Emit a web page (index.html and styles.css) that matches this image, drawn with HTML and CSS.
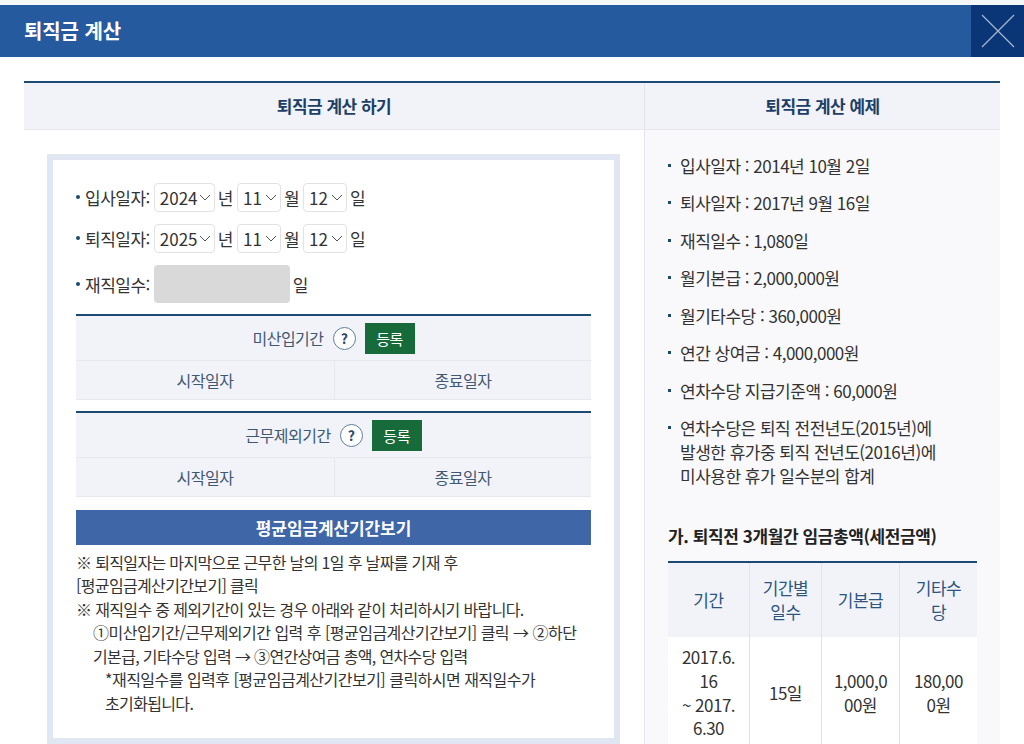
FILE: index.html
```html
<!DOCTYPE html>
<html lang="ko">

<head>
    <meta charset="utf-8">
    <title>퇴직금 계산</title>
    <link rel="stylesheet" href="styles.css">
</head>

<body>
    <div class="top_bar">
        <h1 class="top_title">퇴직금 계산</h1>
        <button class="btn_close">
            <svg width="34" height="34" viewBox="0 0 34 34">
                <path d="M1 1L33 33M33 1L1 33" stroke="#a9b8d0" stroke-width="1.2" fill="none"></path>
            </svg>
        </button>
    </div>

    <div class="content">
        <div class="col_left">
            <div class="col_head">퇴직금 계산 하기</div>
            <div class="calc_box">
                <div class="form_row">
                    <span class="form_label">입사일자:</span>
                    <span class="sel sel_year">2024<svg class="arrow" viewBox="0 0 12 7"><path d="M1 1L6 6L11 1"></path></svg></span>
                    <span class="unit">년</span>
                    <span class="sel">11<svg class="arrow" viewBox="0 0 12 7"><path d="M1 1L6 6L11 1"></path></svg></span>
                    <span class="unit">월</span>
                    <span class="sel">12<svg class="arrow" viewBox="0 0 12 7"><path d="M1 1L6 6L11 1"></path></svg></span>
                    <span class="unit">일</span>
                </div>
                <div class="form_row">
                    <span class="form_label">퇴직일자:</span>
                    <span class="sel sel_year">2025<svg class="arrow" viewBox="0 0 12 7"><path d="M1 1L6 6L11 1"></path></svg></span>
                    <span class="unit">년</span>
                    <span class="sel">11<svg class="arrow" viewBox="0 0 12 7"><path d="M1 1L6 6L11 1"></path></svg></span>
                    <span class="unit">월</span>
                    <span class="sel">12<svg class="arrow" viewBox="0 0 12 7"><path d="M1 1L6 6L11 1"></path></svg></span>
                    <span class="unit">일</span>
                </div>
                <div class="form_row form_row_days">
                    <span class="form_label">재직일수:</span>
                    <span class="days_input"></span>
                    <span class="unit">일</span>
                </div>

                <div class="period">
                    <div class="period_head">미산입기간 <span class="help">?</span> <span class="btn_reg">등록</span></div>
                    <div class="period_cols">
                        <div>시작일자</div>
                        <div>종료일자</div>
                    </div>
                </div>
                <div class="period">
                    <div class="period_head">근무제외기간 <span class="help">?</span> <span class="btn_reg">등록</span></div>
                    <div class="period_cols">
                        <div>시작일자</div>
                        <div>종료일자</div>
                    </div>
                </div>

                <div class="btn_period">평균임금계산기간보기</div>

                <div class="notes">
                    <p>※ 퇴직일자는 마지막으로 근무한 날의 1일 후 날짜를 기재 후<br>[평균임금계산기간보기] 클릭</p>
                    <p>※ 재직일수 중 제외기간이 있는 경우 아래와 같이 처리하시기 바랍니다.</p>
                    <p class="note_sub"><span class="note_wide">①미산입기간/근무제외기간 입력 후 [평균임금계산기간보기] 클릭 → ②하단</span><br>기본급, 기타수당 입력 → ③연간상여금 총액, 연차수당 입력</p>
                    <p class="note_sub2"><span class="note_wide">*재직일수를 입력후 [평균임금계산기간보기] 클릭하시면 재직일수가</span><br>초기화됩니다.</p>
                </div>
            </div>
        </div>

        <div class="col_right">
            <div class="col_head">퇴직금 계산 예제</div>
            <ul class="sample_list">
                <li>입사일자 : 2014년 10월 2일</li>
                <li>퇴사일자 : 2017년 9월 16일</li>
                <li>재직일수 : 1,080일</li>
                <li>월기본급 : 2,000,000원</li>
                <li>월기타수당 : 360,000원</li>
                <li>연간 상여금 : 4,000,000원</li>
                <li>연차수당 지급기준액 : 60,000원</li>
                <li>연차수당은 퇴직 전전년도(2015년)에<br>발생한 휴가중 퇴직 전년도(2016년)에<br>미사용한 휴가 일수분의 합계</li>
            </ul>
            <h2 class="sample_title">가. 퇴직전 3개월간 임금총액(세전금액)</h2>
            <table class="sample_table">
                <tr>
                    <th class="w_period">기간</th>
                    <th class="w_days">기간별<br>일수</th>
                    <th class="w_base">기본급</th>
                    <th>기타수<br>당</th>
                </tr>
                <tr>
                    <td>2017.6.<br>16<br>~ 2017.<br>6.30</td>
                    <td>15일</td>
                    <td>1,000,0<br>00원</td>
                    <td>180,00<br>0원</td>
                </tr>
            </table>
        </div>
    </div>
</body>

</html>
```

FILE: styles.css
```css
html,
body {
    margin: 0;
    height: 744px;
    overflow: hidden;
}

body {
    box-sizing: border-box;
    border-top: 5px solid #f4f7f7;
    background: #fff;
    color: #333;
    font-family: "Noto Sans CJK KR", "Noto Sans", sans-serif;
    font-size: 16px;
    letter-spacing: -0.5px;
}

/* Top bar */

.top_bar {
    display: flex;
    justify-content: space-between;
    align-items: stretch;
    height: 52px;
    background: #265a9f;
}

.top_title {
    margin: 0;
    padding-left: 24px;
    color: #fff;
    font-size: 20px;
    font-weight: 700;
    letter-spacing: -0.1px;
    line-height: 52px;
}

.btn_close {
    display: flex;
    align-items: center;
    justify-content: center;
    width: 53px;
    padding: 0;
    border: 0;
    background: #0a3576;
}

/* Columns */

.content {
    display: flex;
    margin: 24px 24px 0;
    border-top: 2px solid #1d4a72;
    height: 700px;
}

.col_left {
    width: 620px;
}

.col_right {
    width: 355px;
    border-left: 1px solid #e2e4e9;
    background: #f9f9fb;
}

.col_head {
    box-sizing: border-box;
    height: 47px;
    border-bottom: 1px solid #e6e8ec;
    background: #f1f3f9;
    color: #1d3f66;
    font-size: 17px;
    font-weight: 700;
    line-height: 46px;
    text-align: center;
}

/* Calculator box */

.calc_box {
    margin: 24px 24px 0 23px;
    padding: 22px 23px 0;
    border: 6px solid #e1e7f2;
    height: 556px;
    font-size: 17px;
}

.form_row {
    display: flex;
    align-items: center;
    height: 30px;
    margin-bottom: 11px;
}

.form_row_days {
    height: 38px;
    margin-top: 12px;
    margin-bottom: 11px;
}

.form_label {
    position: relative;
    padding-left: 9px;
    margin-right: 4px;
}

.form_label:before {
    content: "";
    position: absolute;
    left: 0;
    top: 10px;
    width: 4px;
    height: 4px;
    border-radius: 50%;
    background: #1d4a72;
}

.sel {
    display: flex;
    align-items: center;
    justify-content: space-between;
    box-sizing: border-box;
    width: 44px;
    height: 29px;
    padding: 0 3px 0 5px;
    border: 1px solid #e2e2e2;
    border-radius: 4px;
    background: #fff;
    letter-spacing: 0;
}

.sel_year {
    width: 61px;
}

.arrow {
    width: 12px;
    height: 7px;
    fill: none;
    stroke: #555;
    stroke-width: 1;
}

.unit {
    margin: 0 4px 0 3px;
}

.days_input {
    width: 136px;
    height: 38px;
    border-radius: 4px;
    background: #d9d9d9;
}

.unit:last-child {
    margin-right: 0;
}

/* Period tables */

.period {
    margin-bottom: 11px;
    border-top: 2px solid #1d4a72;
    background: #f1f3f9;
    color: #3f5873;
    font-size: 16px;
}

.period_head {
    display: flex;
    align-items: center;
    justify-content: center;
    gap: 9px;
    height: 44px;
    border-bottom: 1px solid #e6e8ec;
}

.help {
    box-sizing: border-box;
    width: 23px;
    height: 23px;
    border: 1px solid #5f7d9f;
    border-radius: 50%;
    background: #fff;
    color: #2c4a6e;
    font-size: 14px;
    font-weight: 700;
    line-height: 20px;
    text-align: center;
}

.btn_reg {
    width: 50px;
    height: 31px;
    background: #176a3a;
    color: #fff;
    font-size: 15px;
    line-height: 31px;
    text-align: center;
}

.period_cols {
    display: grid;
    grid-template-columns: 258px 1fr;
    height: 38px;
    border-bottom: 1px solid #e6e8ec;
    line-height: 38px;
    text-align: center;
}

.period_cols div + div {
    border-left: 1px solid #e6e8ec;
}

.btn_period {
    height: 35px;
    margin-top: 13px;
    background: #3f66a6;
    color: #fff;
    font-weight: 700;
    letter-spacing: -0.1px;
    line-height: 35px;
    text-align: center;
}

/* Notes */

.notes {
    margin-top: 5.5px;
    font-size: 16px;
    letter-spacing: -0.65px;
    line-height: 23.5px;
    white-space: nowrap;
}

.notes p {
    margin: 0;
}

.note_wide {
    letter-spacing: -0.52px;
}

.note_sub {
    padding-left: 17px;
}

.note_sub2 {
    padding-left: 29px;
}

/* Sample column */

.sample_list {
    margin: 23.5px 0 0;
    padding: 0 22px 0 35px;
    list-style: none;
    font-size: 17px;
    line-height: 24px;
}

.sample_list li {
    position: relative;
    margin-bottom: 13.5px;
}

.sample_list li:before {
    content: "";
    position: absolute;
    left: -12px;
    top: 10px;
    width: 3px;
    height: 3px;
    background: #1d4a72;
}

.sample_title {
    margin: 36px 0 0 23px;
    color: #222;
    font-size: 17px;
    font-weight: 700;
    letter-spacing: -0.4px;
    line-height: 24px;
}

.sample_table {
    width: 309px;
    margin: 13px 0 0 23px;
    border-top: 2px solid #1d4a72;
    border-collapse: collapse;
    table-layout: fixed;
    font-size: 17px;
}

.sample_table th,
.sample_table td {
    padding: 0;
    border-left: 1px solid #e0e3e8;
    font-weight: 400;
    line-height: 23.7px;
    text-align: center;
}

.sample_table th:first-child,
.sample_table td:first-child {
    border-left: 0;
}

.sample_table th {
    height: 74px;
    background: #f1f3f9;
    color: #2c5580;
}

.sample_table td {
    height: 111px;
    background: #fff;
}

.w_period {
    width: 81px;
}

.w_days {
    width: 71px;
}

.w_base {
    width: 77px;
}
```
